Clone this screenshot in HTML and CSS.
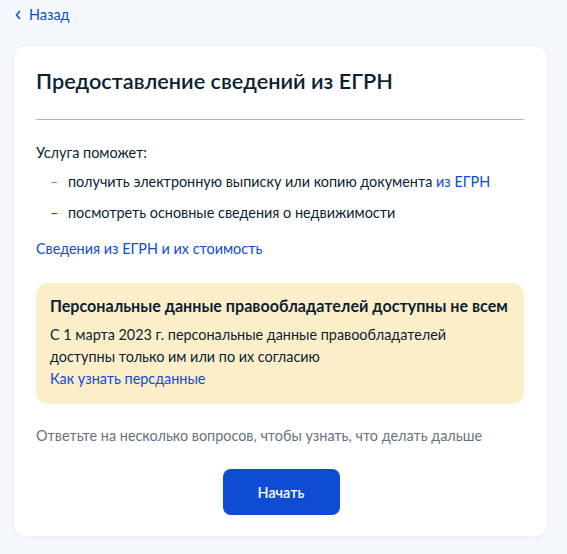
FILE: index.html
```html
<!DOCTYPE html>
<html lang="ru">
<head>
<meta charset="utf-8">
<link rel="stylesheet" href="styles.css">
</head>
<body>
<div class="page">
  <a class="back" href="#">
    <svg class="back-icon" width="8" height="10" viewBox="0 0 8 10"><path d="M5.5 1.5 L2.5 5 L5.5 8.5" fill="none" stroke="#0d4cd3" stroke-width="1.6" stroke-linecap="round" stroke-linejoin="round"/></svg>
    <span>Назад</span>
  </a>
  <div class="card">
    <h1 class="title">Предоставление сведений из ЕГРН</h1>
    <div class="divider"></div>
    <p class="lead">Услуга поможет:</p>
    <ul class="list">
      <li><span class="dash dash-light">–</span><span>получить электронную выписку или копию документа <a href="#" class="link">из ЕГРН</a></span></li>
      <li><span class="dash">–</span><span>посмотреть основные сведения о недвижимости</span></li>
    </ul>
    <a href="#" class="link block-link">Сведения из ЕГРН и их стоимость</a>
    <div class="notice">
      <div class="notice-title">Персональные данные правообладателей доступны не всем</div>
      <div class="notice-text">С 1 марта 2023 г. персональные данные правообладателей<br>доступны только им или по их согласию</div>
      <a href="#" class="link">Как узнать персданные</a>
    </div>
    <p class="hint">Ответьте на несколько вопросов, чтобы узнать, что делать дальше</p>
    <div class="actions"><button class="btn">Начать</button></div>
  </div>
</div>
</body>
</html>
```
FILE: styles.css
```css
* { box-sizing: border-box; }
html, body { margin: 0; padding: 0; }
body {
  background: #f4f7fb;
  font-family: Lato, "Noto Sans", "Liberation Sans", sans-serif;
  color: #0b1f33;
  font-size: 14.4px;
  line-height: 20px;
}
.page {
  width: 567px;
  height: 554px;
  padding: 5px 20px 0 14px;
}
.back {
  display: flex;
  align-items: center;
  gap: 7px;
  color: #0d4cd3;
  text-decoration: none;
  font-size: 14.4px;
  line-height: 20px;
  height: 20px;
  width: max-content;
}
.back-icon { display: block; }
.card {
  margin-top: 21px;
  width: 533px;
  background: #fff;
  border-radius: 12px;
  box-shadow: 0 1px 4px rgba(11, 31, 51, 0.06);
  padding: 21px 23px 21px 22px;
}
.title {
  margin: 0;
  font-size: 21.7px;
  line-height: 28px;
  font-weight: 600;
  color: #0b1f33;
}
.divider {
  margin-top: 24px;
  height: 1px;
  background: #a9b8c8;
}
.lead { margin: 23px 0 0; }
.list {
  list-style: none;
  margin: 9px 0 0;
  padding: 0 0 0 14px;
  display: flex;
  flex-direction: column;
  gap: 11px;
}
.list li { display: flex; gap: 9px; }
.dash { color: #0d4cd3; width: 9px; }
.dash-light { color: #7d93d6; }
.link { color: #0d4cd3; text-decoration: none; }
.block-link { display: block; margin-top: 16px; width: max-content; }
.notice {
  margin-top: 24px;
  background: #fdeeca;
  border-radius: 12px;
  padding: 12px 12px 14px 14px;
  line-height: 22px;
}
.notice-title {
  font-size: 16.1px;
  font-weight: 700;
  line-height: 22px;
  margin-bottom: 7px;
  white-space: nowrap;
}
.notice .link { display: block; width: max-content; }
.hint {
  margin: 22px 0 0;
  color: #66727f;
}
.actions {
  margin-top: 23px;
  display: flex;
  justify-content: center;
}
.btn {
  width: 117px;
  height: 46px;
  border: 0;
  border-radius: 8px;
  background: #0d4cd3;
  color: #fff;
  font-family: inherit;
  font-size: 14.4px;
  font-weight: 600;
  margin-left: 2px;
}
```
